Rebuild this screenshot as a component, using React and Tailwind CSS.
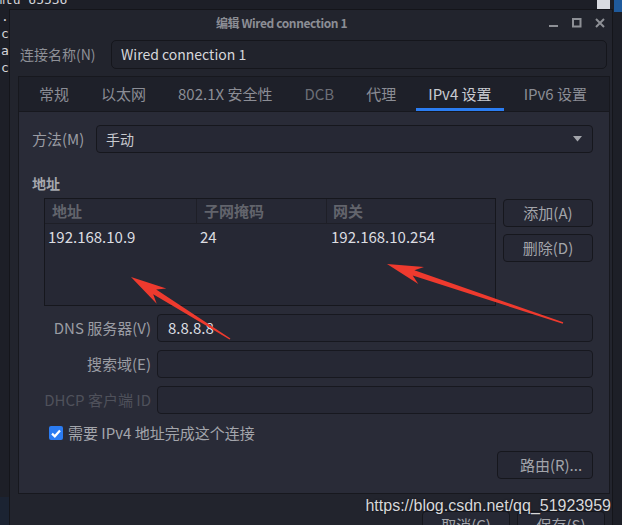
import React from "react";

const cjk = { fontFamily: '"Noto Sans CJK SC", "Noto Sans", sans-serif' };

// red annotation arrow, tip -> tail
function arrowPoints(tip, tail, headLen = 36, headHalf = 9, shaftHalf = 2.8, tailHalf = 0.7) {
  const dx = tail[0] - tip[0];
  const dy = tail[1] - tip[1];
  const len = Math.hypot(dx, dy);
  const d = [dx / len, dy / len];
  const n = [-d[1], d[0]];
  const at = (t, w) => [tip[0] + d[0] * t + n[0] * w, tip[1] + d[1] * t + n[1] * w];
  const pts = [
    tip,
    at(headLen, headHalf),
    at(headLen - 8, shaftHalf),
    [tail[0] + n[0] * tailHalf, tail[1] + n[1] * tailHalf],
    [tail[0] - n[0] * tailHalf, tail[1] - n[1] * tailHalf],
    at(headLen - 8, -shaftHalf),
    at(headLen, -headHalf),
  ];
  return pts.map((p) => p[0].toFixed(1) + "," + p[1].toFixed(1)).join(" ");
}

function Field({ label, value, dim }) {
  return (
    <div className="flex items-center mt-[8px] first:mt-0">
      <div
        className={
          "w-[125px] pr-[6px] text-right text-[15px] leading-[18px] whitespace-nowrap " +
          (dim ? "text-[#4f515b]" : "text-[#9a9ca3]")
        }
      >
        {label}
      </div>
      <div className="flex-1 h-[28px] rounded-[4px] border border-[#17181f] bg-[#262834] flex items-center px-[10px] text-[15px] text-[#dcdde1]">
        {value}
      </div>
    </div>
  );
}

function Button({ children, className = "" }) {
  return (
    <div
      className={
        "h-[28px] rounded-[4px] border border-[#16171d] bg-[#262834] flex items-center justify-center text-[15px] text-[#a3a5ab] " +
        className
      }
    >
      {children}
    </div>
  );
}

export default function App() {
  const tabs = ["常规", "以太网", "802.1X 安全性", "DCB", "代理", "IPv4 设置", "IPv6 设置"];
  const active = "IPv4 设置";

  return (
    <div className="relative w-[622px] h-[525px] overflow-hidden bg-[#1d1f27]" style={cjk}>
      {/* terminal behind the dialog */}
      <div
        className="absolute left-0 top-0 text-[13px] leading-[17px] text-[#d4d4d8]"
        style={{ fontFamily: '"DejaVu Sans Mono", monospace' }}
      >
        <div className="-mt-[9px] -ml-[3px]">mtu 65536</div>
        <div className="ml-[1px]">.</div>
        <div className="ml-[1px]">c</div>
        <div className="ml-[1px]">a</div>
        <div className="ml-[1px]">c</div>
      </div>
      <div className="absolute right-[12px] top-0 w-[13px] h-[9px] bg-[#d9dbe0]" />
      <div className="absolute right-0 top-0 w-[8px] h-[12px] bg-[#1f5a9c]" />
      <div className="absolute left-0 top-[497px] w-[9px] h-[28px] bg-[#1b2332]" />

      {/* dialog window */}
      <div className="absolute left-[9px] top-[9px] w-[604px] h-[540px] bg-[#22242d] border border-[#14151a] flex flex-col">
        {/* title bar */}
        <div className="h-[26px] flex items-center">
          <div className="flex-1 flex justify-center pl-[4px]">
            <span className="text-[12px] font-bold text-[#8c8e95] tracking-[-0.4px]">编辑 Wired connection 1</span>
          </div>
          <div className="flex items-center gap-[13px] pr-[7px] text-[#8e9096]">
            <svg width="10" height="10" viewBox="0 0 10 10">
              <rect x="0" y="7" width="9" height="2" fill="currentColor" />
            </svg>
            <svg width="10" height="10" viewBox="0 0 10 10">
              <rect x="1" y="1" width="7.5" height="7.5" fill="none" stroke="currentColor" strokeWidth="2" />
            </svg>
            <svg width="10" height="10" viewBox="0 0 10 10">
              <path d="M1 1 L9 9 M9 1 L1 9" stroke="currentColor" strokeWidth="2" />
            </svg>
          </div>
        </div>

        {/* connection name */}
        <div className="mt-[4px] flex items-center pl-[10px] pr-[5px]">
          <div className="w-[91px] text-[14px] text-[#8e9097] whitespace-nowrap">连接名称(N)</div>
          <div className="flex-1 h-[29px] rounded-[5px] border border-[#15161c] bg-[#21232c] flex items-center px-[9px] text-[14px] text-[#d6d7db]">
            Wired connection 1
          </div>
        </div>

        {/* notebook */}
        <div className="mt-[7px] ml-[8px] mr-[2px] border border-[#17181e] flex flex-col">
          <div className="h-[35px] bg-[#1e2029] border-b border-[#17181e] flex pl-[4px]">
            {tabs.map((t) => (
              <div
                key={t}
                className={
                  "mx-[4px] px-[12px] h-full flex items-center border-b-[3px] pt-[3px] text-[15px] whitespace-nowrap " +
                  (t === active
                    ? "border-[#2b7df2] text-[#c9cbd1]"
                    : t === "DCB"
                    ? "border-transparent text-[#6c6e76]"
                    : "border-transparent text-[#8b8d95]")
                }
              >
                {t}
              </div>
            ))}
          </div>

          <div className="bg-[#292b37] pl-[13px] pr-[16px] pt-[13px] pb-[14px]">
            {/* method */}
            <div className="flex items-center">
              <div className="w-[64px] text-[15px] text-[#9a9ca3]">方法(M)</div>
              <div className="flex-1 h-[28px] rounded-[4px] border border-[#16171d] bg-[#262834] flex items-center justify-between pl-[9px] pr-[10px] text-[14px] text-[#c8cacf]">
                <span>手动</span>
                <svg width="9" height="6" viewBox="0 0 9 6">
                  <path d="M0 0 H9 L4.5 5.5 Z" fill="#a2a4aa" />
                </svg>
              </div>
            </div>

            <div className="mt-[21px] h-[18px] leading-[18px] text-[14px] font-bold text-[#a6a8ae]">地址</div>

            {/* address table + buttons */}
            <div className="mt-[6px] pl-[12px] flex items-start">
              <div className="flex-1 h-[108px] border border-[#16171d] bg-[#262834]">
                <div className="h-[25px] flex border-b border-[#1e1f27] text-[15px] font-bold text-[#62646c]">
                  <div className="w-[152px] pl-[7px] flex items-center border-r border-[#1e1f27]">地址</div>
                  <div className="w-[130px] pl-[7px] flex items-center border-r border-[#1e1f27]">子网掩码</div>
                  <div className="flex-1 pl-[6px] flex items-center">网关</div>
                </div>
                <div className="h-[27px] flex items-center text-[15px] text-[#dcdde1]">
                  <div className="w-[152px] pl-[3px]">192.168.10.9</div>
                  <div className="w-[130px] pl-[3px]">24</div>
                  <div className="flex-1 pl-[4px]">192.168.10.254</div>
                </div>
              </div>
              <div className="ml-[7px] w-[90px] flex flex-col gap-[7px] pt-[1px]">
                <Button>添加(A)</Button>
                <Button>删除(D)</Button>
              </div>
            </div>

            <div className="mt-[8px] flex flex-col">
              <Field label="DNS 服务器(V)" value="8.8.8.8" />
              <Field label="搜索域(E)" value="" />
              <Field label="DHCP 客户端 ID" value="" dim />
            </div>

            <div className="mt-[10px] h-[18px] pl-[17px] flex items-center gap-[5px]">
              <div className="w-[14px] h-[14px] rounded-[2px] bg-[#2b7cf2] flex items-center justify-center">
                <svg width="10" height="9" viewBox="0 0 10 9">
                  <path d="M1 4.6 L3.8 7.3 L9 1.4" fill="none" stroke="#ffffff" strokeWidth="2.2" />
                </svg>
              </div>
              <span className="text-[15px] text-[#a3a5ab]">需要 IPv4 地址完成这个连接</span>
            </div>

            <div className="mt-[9px] flex justify-end">
              <Button className="w-[96px] pl-[12px]">路由(R)...</Button>
            </div>
          </div>
        </div>

        {/* dialog buttons, mostly cut off */}
        <div className="mt-[17px] flex justify-end gap-[7px] pr-[7px]">
          <Button className="w-[88px] bg-[#22242d]">取消(C)</Button>
          <Button className="w-[88px] bg-[#22242d]">保存(S)</Button>
        </div>
      </div>

      {/* annotation arrows */}
      <svg className="absolute inset-0 pointer-events-none" width="622" height="525" viewBox="0 0 622 525">
        <polygon points={arrowPoints([131, 277], [230, 339])} fill="#ee3a2e" />
        <polygon points={arrowPoints([387, 264], [563, 323])} fill="#ee3a2e" />
      </svg>

      {/* watermark */}
      <div
        className="absolute right-[11px] top-[495px] text-[16px] leading-[22px] text-[#d8d8da]"
        style={{ fontFamily: '"Liberation Sans", Arial, sans-serif', textShadow: "0 0 2px rgba(0,0,0,0.6)" }}
      >
        https://blog.csdn.net/qq_51923959
      </div>
    </div>
  );
}
